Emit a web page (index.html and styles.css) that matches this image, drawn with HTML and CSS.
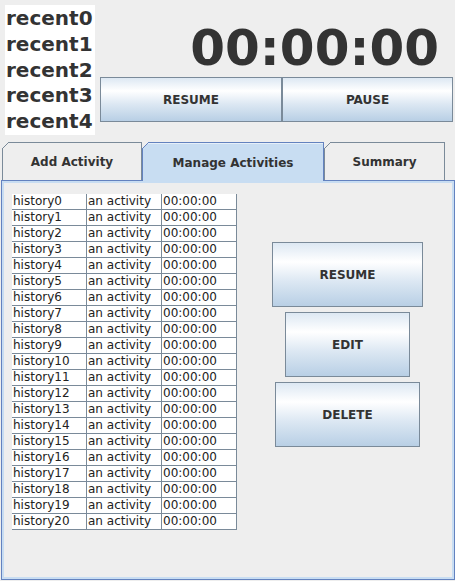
FILE: index.html
```html
<!DOCTYPE html>
<html>
<head>
<meta charset="utf-8">
<link rel="stylesheet" href="styles.css">
</head>
<body>
<div class="app">
  <div class="top">
    <div class="recent">
      <div class="recent-item">recent0</div>
      <div class="recent-item">recent1</div>
      <div class="recent-item">recent2</div>
      <div class="recent-item">recent3</div>
      <div class="recent-item">recent4</div>
    </div>
    <div class="top-right">
      <div class="timer">00:00:00</div>
      <div class="controls">
        <button class="btn btn-resume">RESUME</button>
        <button class="btn btn-pause">PAUSE</button>
      </div>
    </div>
  </div>
  <div class="tabs">
    <div class="tab tab-add">Add Activity</div>
    <div class="tab tab-manage selected">Manage Activities</div>
    <div class="tab tab-summary">Summary</div>
  </div>
  <div class="panel">
    <div class="panel-inner">
      <div class="history">
        <div class="cell">history0</div><div class="cell">an activity</div><div class="cell">00:00:00</div>
        <div class="cell">history1</div><div class="cell">an activity</div><div class="cell">00:00:00</div>
        <div class="cell">history2</div><div class="cell">an activity</div><div class="cell">00:00:00</div>
        <div class="cell">history3</div><div class="cell">an activity</div><div class="cell">00:00:00</div>
        <div class="cell">history4</div><div class="cell">an activity</div><div class="cell">00:00:00</div>
        <div class="cell">history5</div><div class="cell">an activity</div><div class="cell">00:00:00</div>
        <div class="cell">history6</div><div class="cell">an activity</div><div class="cell">00:00:00</div>
        <div class="cell">history7</div><div class="cell">an activity</div><div class="cell">00:00:00</div>
        <div class="cell">history8</div><div class="cell">an activity</div><div class="cell">00:00:00</div>
        <div class="cell">history9</div><div class="cell">an activity</div><div class="cell">00:00:00</div>
        <div class="cell">history10</div><div class="cell">an activity</div><div class="cell">00:00:00</div>
        <div class="cell">history11</div><div class="cell">an activity</div><div class="cell">00:00:00</div>
        <div class="cell">history12</div><div class="cell">an activity</div><div class="cell">00:00:00</div>
        <div class="cell">history13</div><div class="cell">an activity</div><div class="cell">00:00:00</div>
        <div class="cell">history14</div><div class="cell">an activity</div><div class="cell">00:00:00</div>
        <div class="cell">history15</div><div class="cell">an activity</div><div class="cell">00:00:00</div>
        <div class="cell">history16</div><div class="cell">an activity</div><div class="cell">00:00:00</div>
        <div class="cell">history17</div><div class="cell">an activity</div><div class="cell">00:00:00</div>
        <div class="cell">history18</div><div class="cell">an activity</div><div class="cell">00:00:00</div>
        <div class="cell">history19</div><div class="cell">an activity</div><div class="cell">00:00:00</div>
        <div class="cell">history20</div><div class="cell">an activity</div><div class="cell">00:00:00</div>
      </div>
      <div class="actions">
        <button class="btn act act-resume">RESUME</button>
        <button class="btn act act-edit">EDIT</button>
        <button class="btn act act-delete">DELETE</button>
      </div>
    </div>
  </div>
</div>
</body>
</html>
```
FILE: styles.css
```css
html, body {
  margin: 0;
  padding: 0;
  background: #eeeeee;
  overflow: hidden;
}
body {
  font-family: "DejaVu Sans", "Liberation Sans", sans-serif;
  color: #333333;
}
.app {
  width: 455px;
  height: 581px;
}
.top {
  display: flex;
  height: 142px;
}
.recent {
  margin: 5px 0 0 5px;
  width: 90px;
  height: 130px;
  background: #ffffff;
  box-sizing: border-box;
  padding: 1px 0 0 1px;
}
.recent-item {
  font-size: 20px;
  font-weight: bold;
  line-height: 25.8px;
  height: 25.8px;
  color: #333333;
}
.top-right {
  margin-left: 5px;
  width: 353px;
  display: flex;
  flex-direction: column;
}
.timer {
  box-sizing: border-box;
  height: 77px;
  padding: 19px 14px 0 0;
  font-size: 50px;
  font-weight: bold;
  line-height: 58px;
  text-align: right;
  color: #333333;
  white-space: nowrap;
}
.controls {
  display: flex;
  height: 45px;
}
.btn {
  box-sizing: border-box;
  margin: 0;
  padding: 0;
  border: 1px solid #7a8a99;
  background: linear-gradient(to bottom, #dde8f3 0%, #ffffff 30%, #dde8f3 60%, #b8cfe5 100%);
  font-family: "DejaVu Sans", "Liberation Sans", sans-serif;
  font-size: 12px;
  font-weight: bold;
  color: #333333;
  display: flex;
  align-items: center;
  justify-content: center;
}
.btn-resume {
  width: 182px;
  height: 45px;
}
.btn-pause {
  width: 171px;
  height: 45px;
}
.tabs {
  display: flex;
  height: 38px;
  padding-left: 2px;
}
.tab {
  position: relative;
  box-sizing: border-box;
  height: 38px;
  border: 1px solid #7a8a99;
  border-bottom: none;
  background: #eeeeee;
  font-size: 12px;
  font-weight: bold;
  color: #333333;
  display: flex;
  align-items: center;
  justify-content: center;
  align-self: flex-start;
  padding-top: 1px;
}
.tab::before {
  content: "";
  position: absolute;
  top: -1px;
  left: -1px;
  width: 7px;
  height: 7px;
  background: linear-gradient(135deg, #eeeeee 0%, #eeeeee 44%, #7a8a99 44%, #7a8a99 56%, transparent 56%);
}
.tab-add { width: 140px; }
.tab-manage { width: 182px; }
.tab-summary { width: 121px; }
.tab.selected {
  height: 39px;
  z-index: 1;
  border-color: #6382bf;
  background: #c8ddf2;
  box-shadow: inset 0 1px 0 #e6eff9;
}
.tab.selected::before {
  background: linear-gradient(135deg, #eeeeee 0%, #eeeeee 44%, #6382bf 44%, #6382bf 56%, transparent 56%);
}
.panel {
  box-sizing: border-box;
  margin-left: 1px;
  width: 454px;
  height: 400px;
  border: 1px solid #6382bf;
  background: #c8ddf2;
  padding: 2px;
}
.panel-inner {
  height: 100%;
  background: #eeeeee;
  display: flex;
  align-items: flex-start;
}
.history {
  margin: 11px 0 0 8px;
  display: grid;
  grid-template-columns: 75px 75px 75px;
  grid-auto-rows: 16px;
  background: #ffffff;
}
.cell {
  box-sizing: border-box;
  border-right: 1px solid #7a8a99;
  border-bottom: 1px solid #7a8a99;
  padding-left: 1px;
  font-size: 12px;
  line-height: 15px;
  color: #222222;
  white-space: nowrap;
  overflow: hidden;
}
.actions {
  margin: 59px 0 0 35px;
  width: 151px;
  display: flex;
  flex-direction: column;
  align-items: center;
  gap: 5px;
}
.act {
  height: 65px;
}
.act-resume { width: 151px; }
.act-edit { width: 125px; }
.act-delete { width: 145px; }
```
